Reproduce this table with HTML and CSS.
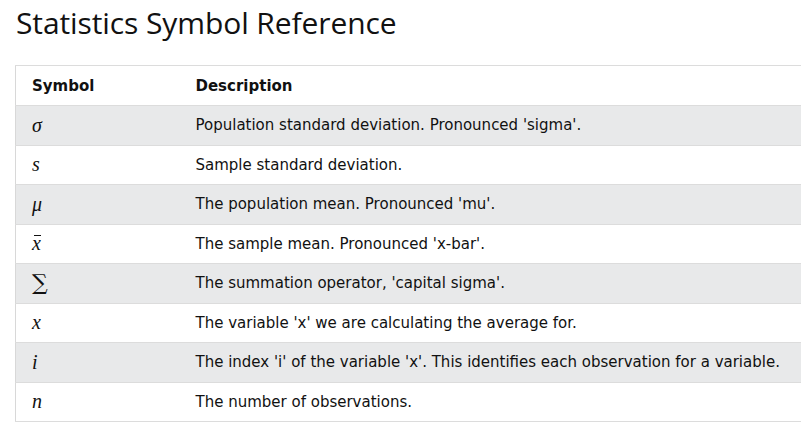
FILE: index.html
```html
<!DOCTYPE html>
<html lang="en">
<head>
<meta charset="utf-8">
<title>Statistics Symbol Reference</title>
<link rel="stylesheet" href="styles.css">
</head>
<body>
<h1 class="title">Statistics Symbol Reference</h1>
<table class="symbols">
  <colgroup><col class="c-sym"><col class="c-desc"></colgroup>
  <thead>
    <tr><th>Symbol</th><th>Description</th></tr>
  </thead>
  <tbody>
    <tr><td><span class="m">σ</span></td><td>Population standard deviation. Pronounced 'sigma'.</td></tr>
    <tr><td><span class="m">s</span></td><td>Sample standard deviation.</td></tr>
    <tr><td><span class="m">μ</span></td><td>The population mean. Pronounced 'mu'.</td></tr>
    <tr><td><span class="m bar">x</span></td><td>The sample mean. Pronounced 'x-bar'.</td></tr>
    <tr><td><span class="op">∑</span></td><td>The summation operator, 'capital sigma'.</td></tr>
    <tr><td><span class="m">x</span></td><td>The variable 'x' we are calculating the average for.</td></tr>
    <tr><td><span class="m">i</span></td><td>The index 'i' of the variable 'x'. This identifies each observation for a variable.</td></tr>
    <tr><td><span class="m">n</span></td><td>The number of observations.</td></tr>
  </tbody>
</table>
</body>
</html>
```
FILE: styles.css
```css
html, body { margin: 0; padding: 0; background: #fff; overflow: hidden; }
body {
  font-family: "DejaVu Sans", "Open Sans", sans-serif;
  color: #111;
  padding: 0 0 0 15px;
}
.title {
  font-family: "Open Sans", sans-serif;
  font-weight: 400;
  font-size: 30px;
  line-height: 44px;
  margin: 0;
  padding: 1px 0 0 1px;
  color: #111;
  letter-spacing: -0.1px;
}
.symbols {
  margin-top: 20px;
  border-collapse: collapse;
  table-layout: fixed;
  width: 820px;
  font-size: 15px;
  border-left: 1px solid #d8d8d8;
}
.c-sym { width: 164px; }
.symbols th, .symbols td {
  text-align: left;
  padding: 0 16px;
  height: 38.5px;
  border-top: 1px solid #dcdcdc;
  border-bottom: 1px solid #dcdcdc;
  vertical-align: middle;
  white-space: nowrap;
}
.symbols th { font-weight: 700; height: 39px; }
.symbols tbody tr:nth-child(odd) { background: #e8e9ea; }
.m {
  font-family: "Liberation Serif", "DejaVu Serif", serif;
  font-style: italic;
  font-size: 20px;
}
.bar { position: relative; display: inline-block; }
.bar::before {
  content: "";
  position: absolute;
  left: 2px;
  right: 0;
  top: 3px;
  border-top: 1px solid #111;
}
.op {
  font-family: "DejaVu Serif", serif;
  font-size: 22px;
  line-height: 1;
}
```
